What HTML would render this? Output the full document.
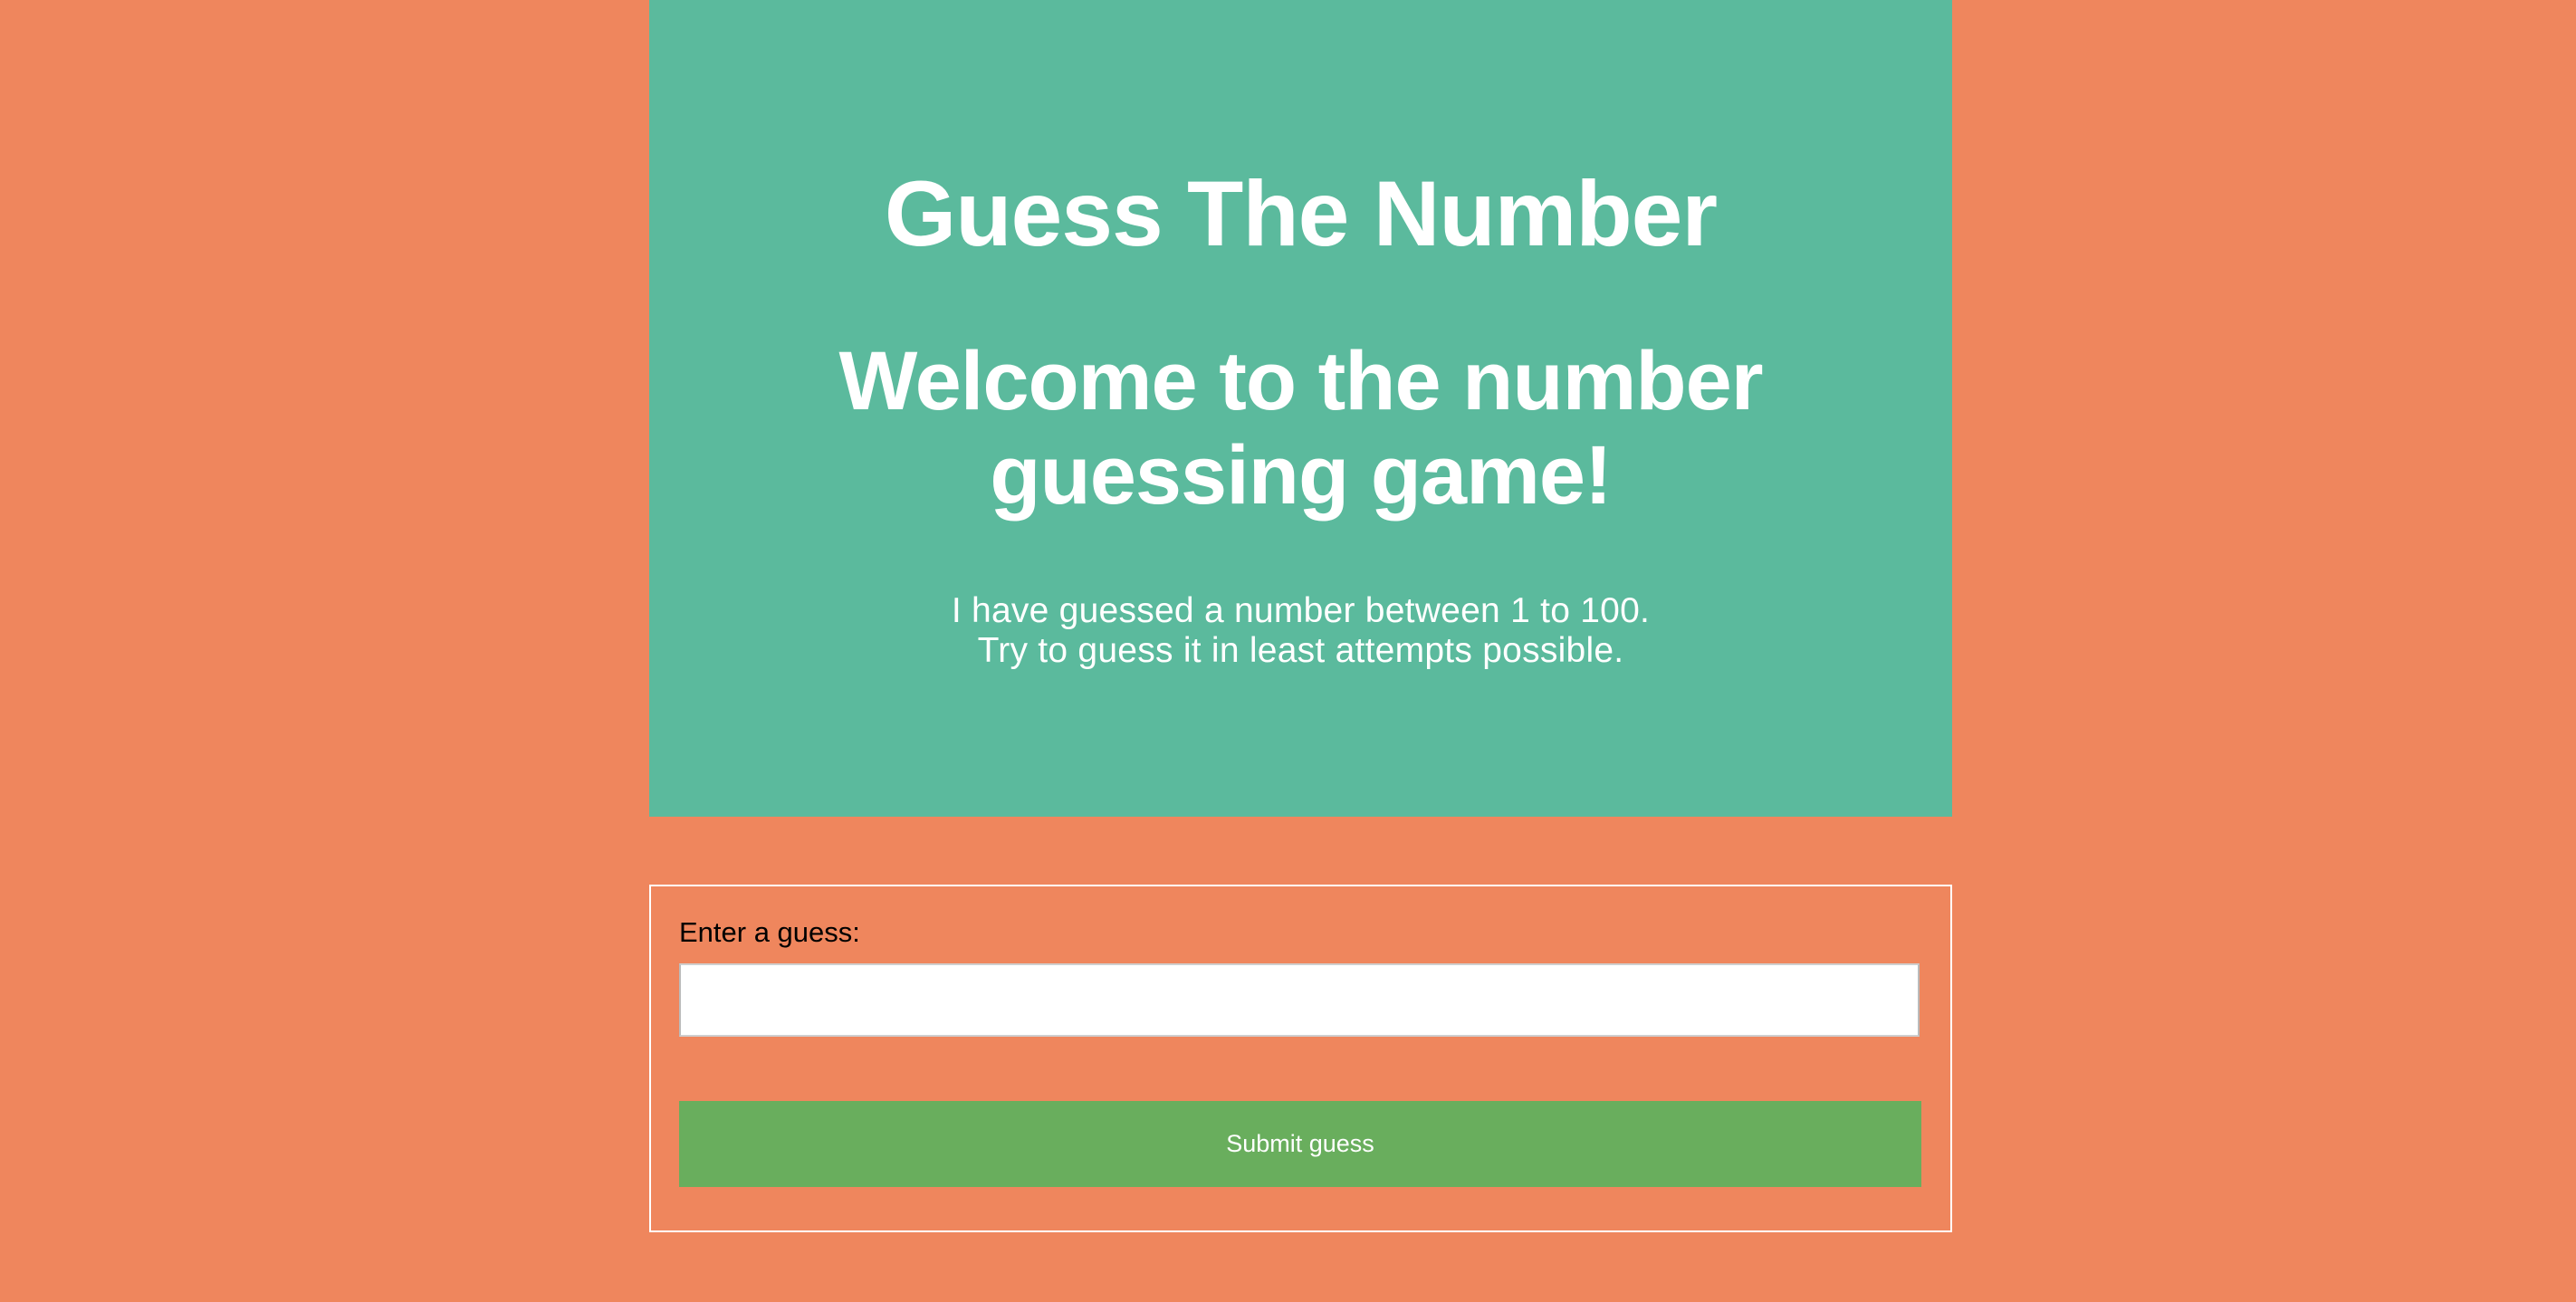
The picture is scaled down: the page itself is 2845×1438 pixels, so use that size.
<!DOCTYPE html>
<html><head><meta charset="utf-8"><style>
html,body{margin:0;padding:0;}
body{width:2845px;height:1438px;background:#EF865D;position:relative;overflow:hidden;font-family:"Liberation Sans",Arial,sans-serif;}
.hero{position:absolute;left:717px;top:0;width:1439px;height:902px;background:#5BBA9D;}
.t{position:absolute;left:717px;width:1439px;text-align:center;color:#fff;white-space:nowrap;}
.form{position:absolute;left:717px;top:977px;width:1435px;height:380px;border:2px solid #fff;}
.label{position:absolute;left:750px;top:1014px;font-size:31px;line-height:31px;color:#000;}
.input{position:absolute;left:750px;top:1064px;width:1366px;height:77px;background:#fff;border:2px solid #cfcfcf;border-left-color:#bbb;border-right-color:#bbb;}
.btn{position:absolute;left:750px;top:1216px;width:1372px;height:95px;background:#69AE5D;color:#fff;font-size:27px;line-height:95px;text-align:center;}
</style></head><body>
<div class="hero"></div>
<div class="t" style="top:185px;font-size:102px;line-height:102px;font-weight:bold;letter-spacing:-1px;">Guess The Number</div>
<div class="t" style="top:369px;font-size:92px;line-height:104px;font-weight:bold;letter-spacing:-1px;">Welcome to the number<br>guessing game!</div>
<div class="t" style="top:653px;font-size:39px;line-height:44px;letter-spacing:0.25px;">I have guessed a number between 1 to 100.<br>Try to guess it in least attempts possible.</div>
<div class="form"></div>
<div class="label">Enter a guess:</div>
<div class="input"></div>
<div class="btn">Submit guess</div>
</body></html>
